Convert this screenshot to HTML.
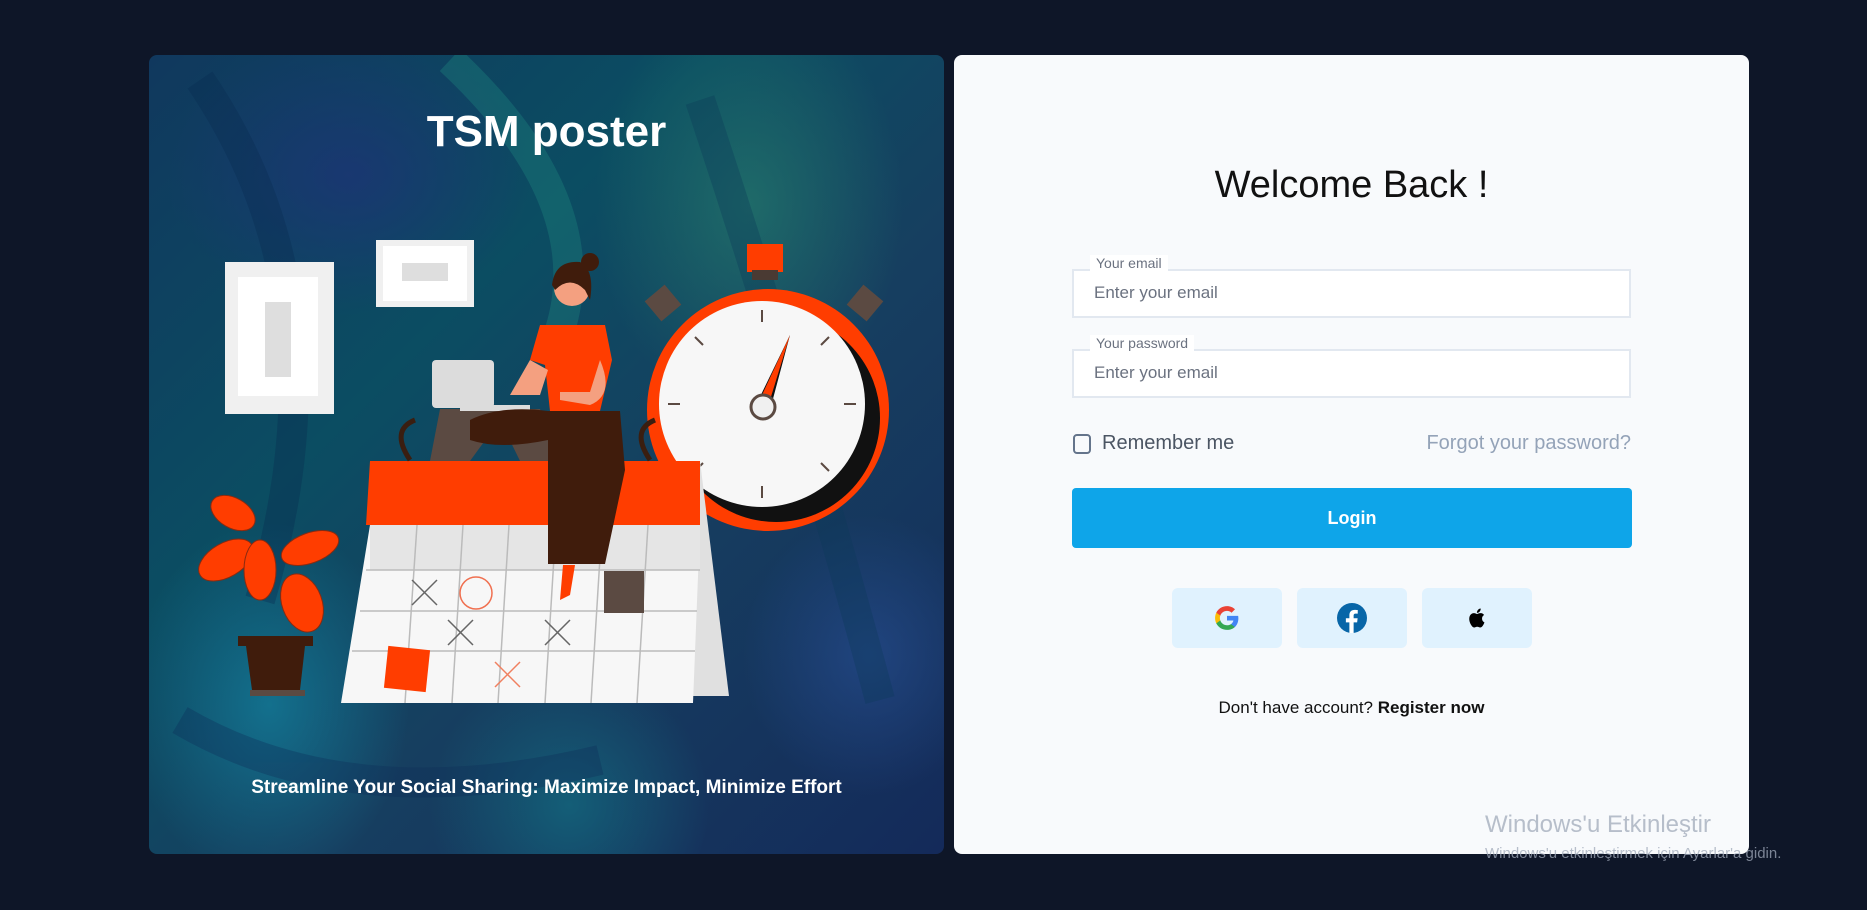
<!DOCTYPE html>
<html><head><meta charset="utf-8"><style>
*{margin:0;padding:0;box-sizing:border-box}
body{width:1867px;height:910px;background:#0e1628;font-family:"Liberation Sans",sans-serif;position:relative;overflow:hidden}
.left{position:absolute;left:149px;top:55px;width:795px;height:799px;border-radius:8px;overflow:hidden;
background:
radial-gradient(ellipse 220px 300px at 600px 150px,rgba(40,130,110,.6),transparent 70%),
radial-gradient(ellipse 200px 260px at 120px 650px,rgba(20,130,160,.7),transparent 70%),
radial-gradient(ellipse 180px 200px at 720px 600px,rgba(40,80,150,.6),transparent 70%),
radial-gradient(ellipse 260px 200px at 200px 120px,rgba(30,50,120,.7),transparent 70%),
radial-gradient(ellipse 200px 200px at 420px 750px,rgba(20,110,130,.7),transparent 70%),
linear-gradient(135deg,#10385e 0%,#0b4d62 35%,#163f60 60%,#142a5a 100%)}
.t1{position:absolute;left:0;width:100%;top:52px;text-align:center;color:#fff;font-weight:bold;font-size:44px}
.t2{position:absolute;left:0;width:100%;top:722px;text-align:center;color:#fff;font-weight:bold;font-size:19px}
.right{position:absolute;left:954px;top:55px;width:795px;height:799px;border-radius:8px;background:#f8fafc}
.abs{position:absolute}
.inp{position:absolute;left:1072px;width:559px;height:49px;border:2px solid #e2e8f0;background:#fff;color:#6b7280;font-size:17px;padding:12px 0 0 20px}
.lab{position:absolute;left:1090px;background:#fff;padding:0 6px;color:#6b7280;font-size:14px}
.soc{position:absolute;top:588px;width:110px;height:60px;background:#e0f2fe;border-radius:6px;display:flex;align-items:center;justify-content:center}
</style></head><body>
<div class="left">
<svg width="795" height="799" style="position:absolute;left:0;top:0" viewBox="149 55 795 799">
<g opacity=".35" stroke-width="30" fill="none">
<path d="M200 80 Q350 300 260 600" stroke="#0a2a50"/>
<path d="M700 100 Q800 400 880 700" stroke="#0b3a5a"/>
<path d="M450 60 Q600 200 560 330" stroke="#1f8a80"/>
<path d="M180 720 Q350 820 600 760" stroke="#0d2e5a"/>
</g>
<rect x="225" y="262" width="109" height="152" fill="#f0f0f0"/>
<rect x="238" y="277" width="80" height="119" fill="#fff"/>
<rect x="265" y="302" width="26" height="75" fill="#dedede"/>
<rect x="376" y="240" width="98" height="67" fill="#f0f0f0"/>
<rect x="383" y="246" width="84" height="55" fill="#fff"/>
<rect x="402" y="263" width="46" height="18" fill="#dedede"/>
<rect x="747" y="244" width="36" height="28" fill="#ff3d00"/>
<rect x="752" y="270" width="26" height="10" fill="#4a3a33"/>
<rect x="650" y="290" width="26" height="26" fill="#5b4a42" transform="rotate(-40 663 303)"/>
<rect x="852" y="290" width="26" height="26" fill="#5b4a42" transform="rotate(40 865 303)"/>
<circle cx="768" cy="410" r="121" fill="#ff3d00"/>
<circle cx="776" cy="418" r="104" fill="#111"/>
<circle cx="762" cy="404" r="103" fill="#f7f7f7"/>
<g stroke="#5b4a42" stroke-width="2">
<line x1="762" y1="310" x2="762" y2="322"/><line x1="762" y1="486" x2="762" y2="498"/>
<line x1="668" y1="404" x2="680" y2="404"/><line x1="844" y1="404" x2="856" y2="404"/>
<line x1="695" y1="337" x2="703" y2="345"/><line x1="829" y1="337" x2="821" y2="345"/>
<line x1="695" y1="471" x2="703" y2="463"/><line x1="829" y1="471" x2="821" y2="463"/>
</g>
<polygon points="790,335 770,410 756,405" fill="#111"/>
<polygon points="790,335 762,395 770,400" fill="#ff3d00"/>
<circle cx="763" cy="407" r="12" fill="#f0f0f0" stroke="#5b4a42" stroke-width="3"/>
<polygon points="672,461 700,461 729,696 672,696" fill="#e0e0e0"/>
<polygon points="341,703 693,703 700,525 370,525" fill="#f7f7f7"/>
<rect x="370" y="525" width="330" height="45" fill="#e5e5e5"/>
<polygon points="370,461 700,461 700,525 366,525" fill="#ff3d00"/>
<g stroke="#bbb" stroke-width="1.5">
<line x1="366" y1="570" x2="700" y2="570"/><line x1="360" y1="611" x2="697" y2="611"/><line x1="352" y1="651" x2="695" y2="651"/>
<line x1="417" y1="525" x2="405" y2="703"/><line x1="463" y1="525" x2="452" y2="703"/><line x1="509" y1="525" x2="498" y2="703"/>
<line x1="556" y1="525" x2="545" y2="703"/><line x1="602" y1="525" x2="591" y2="703"/><line x1="648" y1="525" x2="637" y2="703"/>
</g>
<path d="M412 580 l25 25 M437 580 l-25 25 M448 620 l25 25 M473 620 l-25 25 M545 620 l25 25 M570 620 l-25 25" stroke="#666" stroke-width="1.5"/>
<path d="M495 662 l25 25 M520 662 l-25 25" stroke="#f08060" stroke-width="1.5"/>
<circle cx="476" cy="593" r="16" fill="none" stroke="#f07050" stroke-width="1.5"/>
<rect x="604" y="571" width="40" height="42" fill="#5b4a42"/>
<rect x="386" y="648" width="42" height="42" fill="#ff3d00" transform="rotate(6 407 669)"/>
<path d="M410 460 q-20 -30 5 -40" stroke="#3a1e10" stroke-width="5" fill="none"/>
<path d="M650 460 q-20 -30 5 -40" stroke="#3a1e10" stroke-width="5" fill="none"/>
<polygon points="440,409 540,409 560,461 520,461 500,420 470,461 430,461" fill="#5b4a42"/>
<rect x="432" y="360" width="62" height="48" rx="4" fill="#dcdcdc"/>
<rect x="460" y="405" width="70" height="6" fill="#dcdcdc"/>
<path d="M470 420 Q500 405 548 411 L620 411 L625 470 L605 564 L548 564 L548 440 Q500 450 470 440Z" fill="#401c0c"/>
<path d="M540 325 L605 325 L612 360 L600 411 L550 411 L545 365 L530 360Z" fill="#ff3d00"/>
<path d="M530 360 L510 395 L540 395 L548 370Z" fill="#f4a080"/>
<path d="M600 360 Q615 395 590 405 L560 400 L560 392 L590 392Z" fill="#f4a080"/>
<circle cx="572" cy="288" r="18" fill="#f4a080"/>
<path d="M552 285 Q555 260 580 262 Q595 270 590 300 L585 290 Q570 275 555 290Z" fill="#401c0c"/>
<circle cx="590" cy="262" r="9" fill="#401c0c"/>
<path d="M563 565 L575 565 L570 595 L560 600Z" fill="#ff3d00"/>
<g fill="#ff3d00" stroke="#8a2a10" stroke-width="1">
<ellipse cx="233" cy="513" rx="24" ry="15" transform="rotate(30 233 513)"/>
<ellipse cx="226" cy="560" rx="30" ry="17" transform="rotate(-30 226 560)"/>
<ellipse cx="260" cy="570" rx="16" ry="30"/>
<ellipse cx="310" cy="548" rx="30" ry="15" transform="rotate(-20 310 548)"/>
<ellipse cx="302" cy="603" rx="20" ry="30" transform="rotate(-20 302 603)"/>
</g>
<rect x="238" y="636" width="75" height="10" fill="#401c0c"/>
<polygon points="246,646 305,646 300,690 252,690" fill="#401c0c"/>
<rect x="250" y="690" width="55" height="6" fill="#5b4a42"/>
</svg>
<div class="t1">TSM poster</div>
<div class="t2">Streamline Your Social Sharing: Maximize Impact, Minimize Effort</div>
</div>
<div class="right"></div>
<div class="abs" style="left:954px;width:795px;top:164px;text-align:center;font-size:38px;color:#111">Welcome Back !</div>
<div class="inp" style="top:269px">Enter your email</div>
<div class="lab" style="top:255px">Your email</div>
<div class="inp" style="top:349px">Enter your email</div>
<div class="lab" style="top:335px">Your password</div>
<div class="abs" style="left:1073px;top:434px;width:18px;height:20px;border:2px solid #64748b;border-radius:4px"></div>
<div class="abs" style="left:1102px;top:432px;font-size:20px;color:#4b5563">Remember me</div>
<div class="abs" style="left:1380px;width:251px;text-align:right;top:432px;font-size:20px;color:#94a3b8">Forgot your password?</div>
<div class="abs" style="left:1072px;top:488px;width:560px;height:60px;background:#0ea5e9;border-radius:4px;color:#fff;font-size:18px;font-weight:bold;text-align:center;line-height:60px">Login</div>
<div class="soc" style="left:1172px"><svg width="26" height="26" viewBox="0 0 24 24"><path d="M22.5 12.2c0-.8-.1-1.5-.2-2.2H12v4.3h5.9c-.3 1.4-1 2.5-2.2 3.3v2.7h3.6c2-1.9 3.2-4.7 3.2-8.1z" fill="#4285F4"/><path d="M12 23c3 0 5.5-1 7.3-2.7l-3.6-2.7c-1 .7-2.2 1.1-3.700 1.100-2.900 0-5.300-1.900-6.200-4.500H2.100v2.800C3.900 20.600 7.700 23 12 23z" fill="#34A853"/><path d="M5.8 14.2c-.2-.7-.4-1.4-.4-2.2s.1-1.5.4-2.2V7H2.1C1.4 8.5 1 10.2 1 12s.4 3.5 1.1 5l3.7-2.8z" fill="#FBBC05"/><path d="M12 5.4c1.6 0 3.1.6 4.2 1.7l3.2-3.2C17.5 2.1 15 1 12 1 7.7 1 3.9 3.4 2.1 7l3.7 2.8c.9-2.6 3.3-4.4 6.2-4.4z" fill="#EA4335"/></svg></div>
<div class="soc" style="left:1297px"><svg width="30" height="30" viewBox="0 0 24 24"><circle cx="12" cy="12" r="12" fill="#0866a8"/><path d="M13.3 24v-8.5h2.8l.4-3.3h-3.2v-2.1c0-.9.3-1.6 1.6-1.6h1.7V5.6c-.3 0-1.3-.1-2.5-.1-2.5 0-4.2 1.5-4.2 4.3v2.4H7.1v3.3h2.8V24z" fill="#fff"/></svg></div>
<div class="soc" style="left:1422px"><svg width="22" height="24" viewBox="0 0 24 24"><path d="M17.5 12.6c0-2.6 2.1-3.8 2.2-3.9-1.2-1.8-3.1-2-3.7-2-1.6-.2-3.1.9-3.9.9-.8 0-2.1-.9-3.4-.9-1.7 0-3.4 1-4.3 2.6-1.8 3.2-.5 7.9 1.3 10.5.9 1.3 1.9 2.7 3.2 2.6 1.3 0 1.8-.8 3.3-.8s2 .8 3.4.8c1.4 0 2.3-1.3 3.1-2.6 1-1.5 1.4-2.9 1.4-3-.1 0-2.6-1-2.6-4.2zM15 4.9c.7-.9 1.2-2 1-3.2-1 0-2.3.7-3 1.6-.7.8-1.2 2-1.1 3.1 1.2.1 2.3-.6 3.1-1.5z" fill="#000"/></svg></div>
<div class="abs" style="left:954px;width:795px;top:698px;text-align:center;font-size:17px;color:#111">Don't have account? <b>Register now</b></div>
<div class="abs" style="left:1485px;top:811px;font-size:24px;color:rgba(160,170,185,.75)">Windows'u Etkinleştir</div>
<div class="abs" style="left:1485px;top:845px;font-size:15px;color:rgba(160,170,185,.75)">Windows'u etkinleştirmek için Ayarlar'a gidin.</div>
</body></html>
